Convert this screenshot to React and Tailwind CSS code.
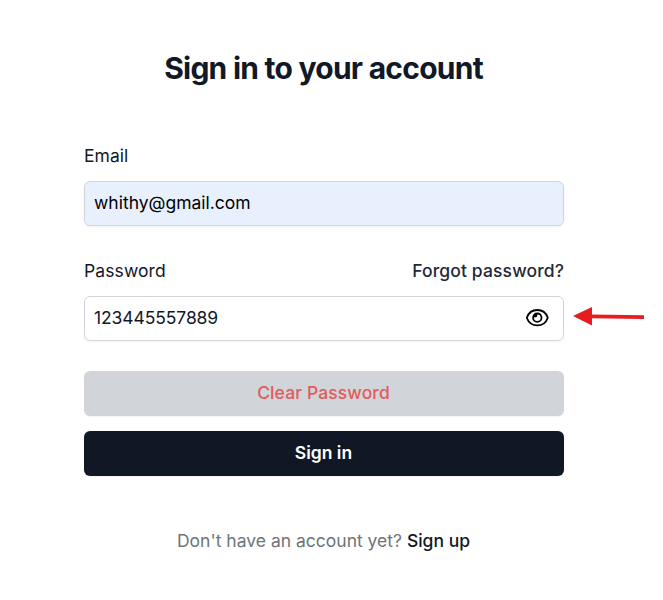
function EyeIcon() {
  return (
    <svg viewBox="-0.3 0.3 24 24" className="h-6 w-6" fill="none" stroke="#000" strokeWidth="1.8">
      <path d="M1.500 12C3.300 7 7.300 4.300 12 4.300S20.700 7 22.500 12C20.700 17 16.700 19.700 12 19.700S3.300 17 1.500 12Z" strokeLinejoin="round" />
      <circle cx="12" cy="12" r="4.200" />
      <path d="M12 8A4 4 0 0 0 8.200 11.500H10.500A1.700 1.700 0 0 0 12 9.800Z" fill="#000" stroke="none" />
    </svg>
  );
}

function Arrow() {
  return (
    <svg viewBox="0 0 72 20" className="absolute left-[573px] top-[307px] h-5 w-[72px]">
      <path d="M0 9L19 0V18.500Z" fill="#e81c1e" />
      <path d="M18 9.300L71 10.100" stroke="#e81c1e" strokeWidth="3.800" />
    </svg>
  );
}

export default function App() {
  return (
    <main className="relative h-[600px] w-[663px] overflow-hidden bg-white pl-[84px] pt-[48px] font-['Inter',sans-serif] text-[17.5px] leading-6 text-[#111827]">
      <div className="w-[480px]">
        <h1 className="-ml-px text-center text-[30px] font-bold leading-10 tracking-[-0.75px]">Sign in to your account</h1>
        <form className="mt-14" onSubmit={(e) => e.preventDefault()}>
          <label htmlFor="email" className="block tracking-[0.02px]">Email</label>
          <input id="email" type="text" defaultValue="whithy@gmail.com" className="mt-[13px] block h-[45px] w-full rounded-md border border-[#d1d5db] bg-[#e8f0fe] px-[9px] pb-0.5 text-black shadow-xs outline-none" />
          <div className="mt-[33px] flex justify-between">
            <label htmlFor="password" className="tracking-[0.1px]">Password</label>
            <a className="font-medium tracking-[0.12px] text-[#1f2937]">Forgot password?</a>
          </div>
          <div className="mt-[13px] flex h-[45px] items-center rounded-md border border-[#d1d5db] px-[9px] pb-0.5 pr-[14px] shadow-xs">
            <input id="password" type="text" defaultValue="123445557889" className="min-w-0 flex-1 tracking-[-0.1px] outline-none" />
            <EyeIcon />
          </div>
          <button className="mt-[30px] block h-[45px] w-full rounded-md bg-[#d1d5d9] pb-0.5 pr-px font-medium tracking-[0.12px] text-[#e05c5c] shadow-xs">Clear Password</button>
          <button className="mt-[15px] block h-[45px] w-full rounded-md bg-[#111825] pb-0.5 pr-px font-semibold text-white shadow-xs">Sign in</button>
        </form>
        <p className="-ml-px mt-[53px] text-center text-[#707478]">
          Don't have an account yet? <a className="font-medium text-[#111827]">Sign up</a>
        </p>
      </div>
      <Arrow />
    </main>
  );
}
